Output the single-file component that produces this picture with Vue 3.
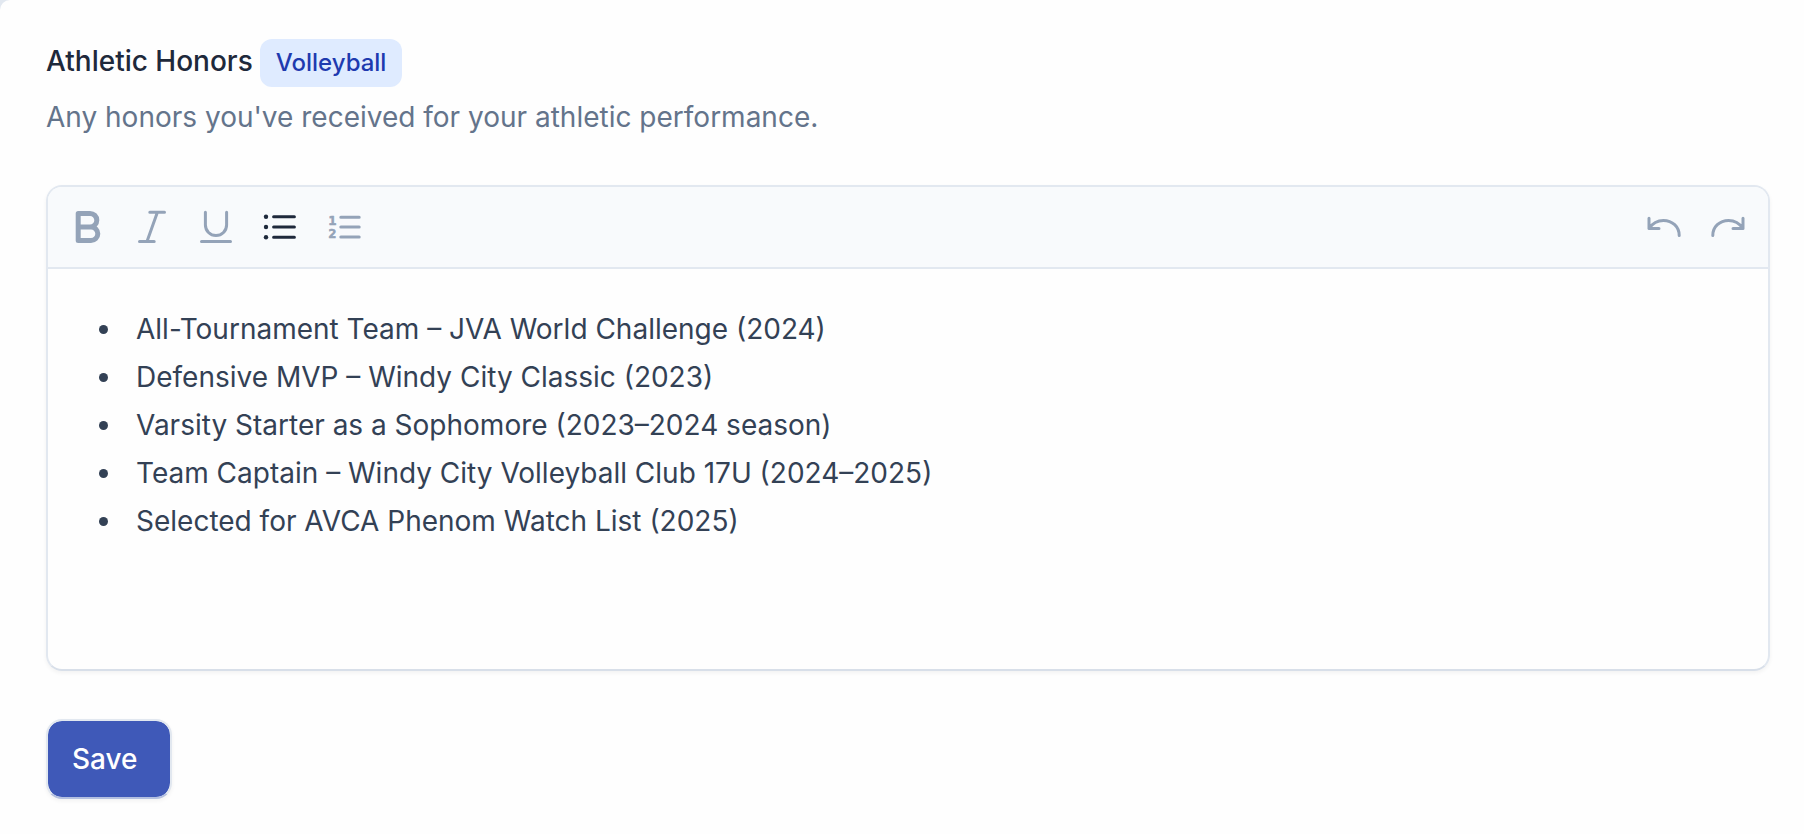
<script setup>
import { ref } from 'vue'

const honors = [
  'All-Tournament Team – JVA World Challenge (2024)',
  'Defensive MVP – Windy City Classic (2023)',
  'Varsity Starter as a Sophomore (2023–2024 season)',
  'Team Captain – Windy City Volleyball Club 17U (2024–2025)',
  'Selected for AVCA Phenom Watch List (2025)',
]
const listStyle = ref('bullet')
</script>

<template>
  <main class="page">
    <form class="card" @submit.prevent>
      <header class="heading">
        <h2 id="honors-title" class="title">Athletic Honors <span class="badge">Volleyball</span></h2>
        <p id="honors-hint" class="hint">Any honors you've received for your athletic performance.</p>
      </header>

      <section class="editor">
        <div class="toolbar" role="toolbar" aria-label="Formatting">
          <div class="group">
            <button type="button" class="tool" aria-label="Bold">
              <svg viewBox="0 0 40 40" class="heavy"><path d="M10.2 6.4H22a6.8 6.8 0 0 1 0 13.6H10.2M10.2 20H23a6.8 6.8 0 0 1 0 13.6H10.2zM10.2 6.4V33.6" /></svg>
            </button>
            <button type="button" class="tool" aria-label="Italic">
              <svg viewBox="0 0 40 40"><path d="M17.8 5.3H32.5M7.5 34.5H22.2M25.4 5.3L15 34.5" /></svg>
            </button>
            <button type="button" class="tool" aria-label="Underline">
              <svg viewBox="0 0 40 40"><path d="M9.4 5.3V18a10.6 10.6 0 0 0 21.2 0V5.3M5.5 34.5H34.5" /></svg>
            </button>
            <button
              type="button"
              class="tool"
              :class="{ active: listStyle === 'bullet' }"
              aria-label="Bulleted list"
              @click="listStyle = 'bullet'"
            >
              <svg viewBox="0 0 40 40">
                <path d="M13.6 9.7H34.4M13.6 20H34.4M13.6 30.3H34.4" />
                <g class="solid"><circle cx="6" cy="9.7" r="2.2" /><circle cx="6" cy="20" r="2.2" /><circle cx="6" cy="30.3" r="2.2" /></g>
              </svg>
            </button>
            <button
              type="button"
              class="tool"
              :class="{ active: listStyle === 'number' }"
              aria-label="Numbered list"
              @click="listStyle = 'number'"
            >
              <svg viewBox="0 0 40 40">
                <path d="M16.8 10.2H35.2M16.8 20H35.2M16.8 30H35.2" />
                <text class="digit" x="4.4" y="18.2">1</text>
                <text class="digit" x="4.4" y="31.2">2</text>
              </svg>
            </button>
          </div>
          <div class="group">
            <button type="button" class="tool" aria-label="Undo">
              <svg viewBox="0 0 40 40"><path d="M5 11.3V21.4H15M5 21.4C8.4 16.4 13.4 13.4 19.4 13.4C28.4 13.4 35.2 19.8 35.2 28.4" /></svg>
            </button>
            <button type="button" class="tool" aria-label="Redo">
              <svg viewBox="0 0 40 40"><path d="M35 11.3V21.4H25M35 21.4C31.6 16.4 26.6 13.4 20.6 13.4C11.6 13.4 4.8 19.8 4.8 28.4" /></svg>
            </button>
          </div>
        </div>
        <div
          class="content"
          contenteditable="true"
          role="textbox"
          aria-multiline="true"
          aria-labelledby="honors-title"
          aria-describedby="honors-hint"
          spellcheck="false"
        >
          <ul class="list">
            <li v-for="honor in honors" :key="honor">{{ honor }}</li>
          </ul>
        </div>
      </section>

      <button type="submit" class="save">Save</button>
    </form>
  </main>
</template>

<style>
body {
  margin: 0;
  background: #e2e8f0;
}
</style>

<style scoped>
.page {
  font-family: Inter, "Liberation Sans", sans-serif;
  font-size: 28px;
  line-height: 48px;
  color: #334155;
}
.card {
  box-sizing: border-box;
  min-height: 100vh;
  padding: 37px 34px 34px 46px;
  background: #fefefe;
  border-top-left-radius: 10px;
}
.title,
.hint {
  margin: 0;
  font-size: 28px;
}
.title {
  display: flex;
  align-items: baseline;
  gap: 7px;
  color: #1e293b;
  font-weight: 500;
}
.badge {
  padding: 0 16px;
  border-radius: 12px;
  background: #dfebff;
  color: #1e3aaf;
  font-size: 24px;
}
.hint {
  margin-top: 6px;
  color: #64748b;
}
.editor {
  margin-top: 44px;
  border: 2px solid #e2e8f0;
  border-bottom-color: #d8dfe9;
  border-radius: 16px;
  box-shadow: 0 2px 4px rgba(0, 0, 0, 0.05);
}
.toolbar {
  display: flex;
  justify-content: space-between;
  padding: 8px;
  border-bottom: 2px solid #e2e8f0;
  border-radius: 14px 14px 0 0;
  background: #f8fafc;
}
.group {
  display: flex;
}
.tool {
  display: grid;
  place-items: center;
  width: 64px;
  height: 64px;
  padding: 0;
  border: 0;
  background: none;
  color: #94a3b8;
  cursor: pointer;
}
.tool.active {
  color: #1e293b;
}
.tool svg {
  width: 40px;
  height: 40px;
  fill: none;
  stroke: currentColor;
  stroke-width: 3;
  stroke-linecap: round;
  stroke-linejoin: round;
}
.tool .heavy {
  stroke-width: 5;
}
.solid,
.digit {
  fill: currentColor;
  stroke: none;
}
.tool .digit {
  font: bold 13px "DejaVu Sans Mono", monospace;
  stroke: currentColor;
  stroke-width: 0.7;
}
.content {
  box-sizing: border-box;
  min-height: 400px;
  padding: 36px 40px;
  outline: none;
}
.list {
  margin: 0;
  padding-left: 36px;
}
.list li {
  padding-left: 12px;
}
.save {
  display: block;
  margin-top: 48px;
  padding: 14px 32px 14px 24px;
  border: 2px solid #e2e8f0;
  border-bottom-color: #b4c0e0;
  border-radius: 16px;
  background: #3f59b8;
  background-clip: padding-box;
  box-shadow: 0 2px 4px rgba(0, 0, 0, 0.05);
  color: #fff;
  font: 500 28px/48px Inter, "Liberation Sans", sans-serif;
  cursor: pointer;
}
</style>
